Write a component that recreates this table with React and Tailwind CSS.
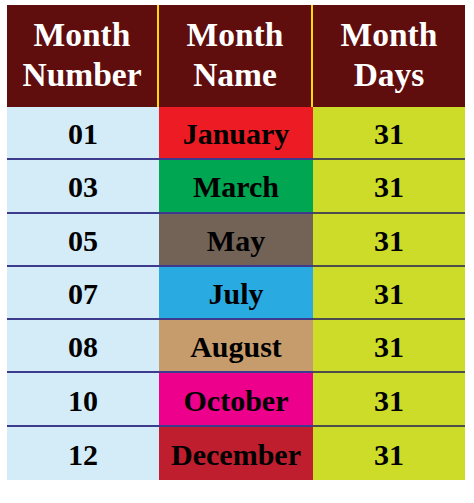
import React from "react";

const rows = [
  { n: "01", name: "January", bg: "bg-[#ed1c24]", d: "31" },
  { n: "03", name: "March", bg: "bg-[#00a651]", d: "31" },
  { n: "05", name: "May", bg: "bg-[#736357]", d: "31" },
  { n: "07", name: "July", bg: "bg-[#29abe2]", d: "31" },
  { n: "08", name: "August", bg: "bg-[#c69c6d]", d: "31" },
  { n: "10", name: "October", bg: "bg-[#ec008c]", d: "31" },
  { n: "12", name: "December", bg: "bg-[#be1e2d]", d: "31" },
];

export default function App() {
  return (
    <div
      className="w-[474px] h-[503px] bg-white pt-[5px] pl-[7px]"
      style={{ fontFamily: '"Liberation Serif", "Times New Roman", serif' }}
    >
      <div className="w-[458px] flex flex-col">
        <div className="flex h-[102px] bg-[#600d0d] text-white font-bold text-[33.5px] leading-[40px] text-center">
          <div className="w-[152px] flex items-center justify-center border-r-2 border-[#f5d90a] pb-[3px]">
            <div>Month<br />Number</div>
          </div>
          <div className="w-[154px] flex items-center justify-center border-r-2 border-[#f5d90a] pb-[3px]">
            <div>Month<br />Name</div>
          </div>
          <div className="w-[152px] flex items-center justify-center pb-[3px]">
            <div>Month<br />Days</div>
          </div>
        </div>
        {rows.map((r, i) => {
          const last = i === rows.length - 1;
          return (
            <div key={r.n} className="flex h-[53.3px] font-bold text-[30px] text-black text-center">
              <div className={`w-[152px] flex items-center justify-center bg-[#d3ecf7] pt-[2px] ${last ? "" : "border-b-[2.5px] border-[#3d3b8e]"}`}>
                {r.n}
              </div>
              <div className={`w-[154px] flex items-center justify-center ${r.bg} pt-[2px] ${last ? "" : "border-b-[2.5px] border-[#3d3b8e]"}`}>
                {r.name}
              </div>
              <div className={`w-[152px] flex items-center justify-center bg-[#cddc29] pt-[2px] ${last ? "" : "border-b-[2.5px] border-[#4d4d4d]"}`}>
                {r.d}
              </div>
            </div>
          );
        })}
      </div>
    </div>
  );
}
